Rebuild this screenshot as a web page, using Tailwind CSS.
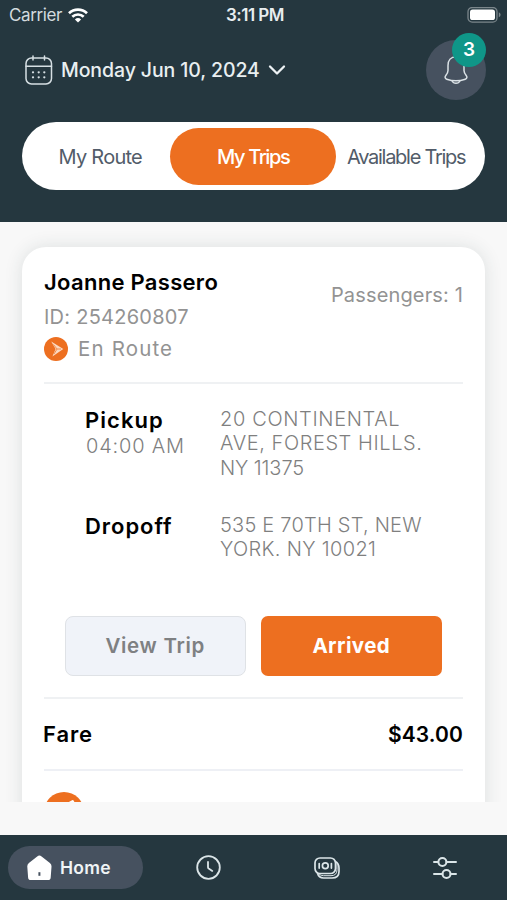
<!DOCTYPE html>
<html lang="en">
<head>
<meta charset="utf-8">
<title>My Trips</title>
<script src="https://cdn.jsdelivr.net/npm/@tailwindcss/browser@4"></script>
</head>
<body class="w-[507px] h-[900px] overflow-hidden bg-[#f8f8f8] font-['Inter',sans-serif] flex flex-col whitespace-nowrap">

<header class="h-[222px] shrink-0 bg-[#25373f] flex flex-col">
  <!-- Status bar -->
  <div class="h-[30px] grid grid-cols-3 items-center pl-[9px] pr-[6px] text-[17px] text-[#dfe5e8]">
    <div class="flex items-center gap-[6px] pt-px">
      <span class="tracking-[-0.4px] text-[#d3dade]">Carrier</span>
      <svg class="w-5 h-[15px]" viewBox="0 0 20 15" fill="none" stroke="#fff" stroke-width="2.7"><path d="M1 5.3a13 13 0 0 1 18 0M4.3 8.800a8.200 8.200 0 0 1 11.400 0"/><path d="M10 14.600 6.900 11.500a4.600 4.600 0 0 1 6.200 0z" fill="#fff" stroke="none"/></svg>
    </div>
    <span class="pt-[2px] text-center font-semibold tracking-[-0.5px] text-[#e8edf0]">3:11 PM</span>
    <svg class="w-[34px] h-[17px] justify-self-end" viewBox="0 0 34 17"><rect x="1" y="0.5" width="29" height="14.6" rx="4.2" fill="none" stroke="#7b868b" stroke-width="1.3"/><rect x="3" y="2.500" width="25" height="10.6" rx="2.6" fill="#fff"/><path d="M31.800 5.300v5q1.800-.8 1.800-2.500t-1.800-2.500z" fill="#7b868b"/></svg>
  </div>

  <!-- Date selector and notifications -->
  <div class="h-[80px] flex items-center pl-[25px] pr-[21px]">
    <svg class="w-[28px] h-[30px]" viewBox="0 0 28 30" fill="none" stroke="#d6dfe3" stroke-width="1.5" stroke-linecap="round"><rect x="1" y="3" width="25.500" height="26" rx="5.500"/><path d="M1 11.200h25.500M8 1v4M19.500 1v4"/><path d="M8 17.300h.01M13.700 17.300h.01M19.300 17.300h.01M8 22.300h.01M13.700 22.300h.01M19.300 22.300h.01" stroke-width="2.300"/></svg>
    <span class="ml-[8px] pt-px text-[19.5px] font-medium tracking-[-0.1px] text-[#e9eff1]">Monday Jun 10, 2024</span>
    <svg class="ml-[8px] w-[18px] h-[12px]" viewBox="0 0 18 12" fill="none" stroke="#edf2f4" stroke-width="2.300" stroke-linecap="round" stroke-linejoin="round"><path d="M2 2.500l7 7 7-7"/></svg>
    <div class="relative ml-auto w-[60px] h-[60px] rounded-full bg-[#46515f] flex items-center justify-center">
      <svg class="w-[26px] h-[30px]" viewBox="0 0 26 30" fill="none" stroke="#dbe2e6" stroke-width="1.500" stroke-linejoin="round" stroke-linecap="round"><path d="M13 1.800C7.800 1.800 5 5.600 5 10.400v5.200c0 1.900-.8 3.200-2.200 4.900-1.200 1.500-.9 3.100.9 3.700 6 2 12.600 2 18.600 0 1.800-.6 2.100-2.200.9-3.700-1.400-1.700-2.200-3-2.200-4.900v-5.200C21 5.600 18.200 1.800 13 1.800z"/><path d="M9 25.700c.8 1.700 2.300 2.600 4 2.600s3.200-.9 4-2.600"/></svg>
      <span class="absolute left-[26px] top-[-7px] w-[34px] h-[34px] rounded-full bg-[#0f9688] text-white text-[19px] font-semibold flex items-center justify-center pt-px">3</span>
    </div>
  </div>

  <!-- Tabs -->
  <div class="mt-[12px] mx-[22px] h-[68px] rounded-full bg-white flex items-center text-[20px] text-[#525c69]">
    <div class="w-[148px] pt-px pl-[36.500px] tracking-[-0.74px]">My Route</div>
    <div class="w-[166px] h-[57px] rounded-full bg-[#ed6f20] text-white font-medium flex items-center pt-px pl-[47px] tracking-[-1.36px]">My Trips</div>
    <div class="pt-px pl-[11px] tracking-[-1.27px]">Available Trips</div>
  </div>
</header>

<!-- Trip list -->
<main class="h-[580px] shrink-0 overflow-hidden px-[22px] pt-[25px]">
  <article class="h-[640px] rounded-[24px] bg-white px-[22px] shadow-[0_0_18px_rgba(40,60,60,0.13)] text-[20px] text-[#939393]">
    <div class="h-[137px] pt-[19px] flex justify-between border-b-2 border-[#eff1f3]">
      <div>
        <h1 class="h-[32px] leading-[32px] text-[22px] font-semibold tracking-[0.3px] text-black">Joanne Passero</h1>
        <p class="h-[35px] leading-[38px] tracking-[0.25px]">ID: 254260807</p>
        <div class="h-[32px] flex items-center">
          <svg class="w-6 h-6" viewBox="0 0 24 24"><circle cx="12" cy="12" r="12" fill="#ed6f20"/><path d="M7.200 4.500 19.300 12 8.400 19.500 11.600 12z" fill="#fbd9c2"/><path d="M9.500 7.500l3.500 4.500-3 5M13 12h4" fill="none" stroke="#ed6f20" stroke-width=".7"/></svg>
          <span class="ml-[10px] pt-px text-[20.500px] tracking-[1.15px]">En Route</span>
        </div>
      </div>
      <p class="mt-[14px] h-[30px] leading-[30px] tracking-[0.15px]">Passengers: 1</p>
    </div>

    <div class="pt-[23px] pl-[42px] font-light text-[#7f7f7f]">
      <div class="flex h-[106px]">
        <div class="w-[134px]">
          <h2 class="h-[26px] leading-[26px] text-[22px] font-semibold tracking-[1.05px] text-black -ml-px">Pickup</h2>
          <p class="h-[26px] leading-[27px] tracking-[0.8px]">04:00 AM</p>
        </div>
        <p class="leading-[24.400px]"><span class="tracking-[0.65px]">20 CONTINENTAL</span><br><span class="tracking-[0.57px]">AVE, FOREST HILLS.</span><br><span class="tracking-[-0.1px]">NY 11375</span></p>
      </div>
      <div class="flex h-[103px]">
        <h2 class="w-[135px] h-[26px] leading-[26px] text-[22px] font-semibold tracking-[0.95px] text-black -ml-px">Dropoff</h2>
        <p class="leading-[24.400px]"><span class="tracking-[0.22px]">535 E 70TH ST, NEW</span><br><span class="tracking-[0.33px]">YORK. NY 10021</span></p>
      </div>
    </div>

    <div class="h-[83px] px-[21px] flex gap-[15px] border-b-2 border-[#eff1f3]">
      <button class="w-[181px] h-[60px] pt-px rounded-[8px] border-[1.500px] border-[#dfe2e6] bg-[#f0f3f9] text-[20.500px] font-semibold tracking-[0.7px] text-[#7e8082]">View Trip</button>
      <button class="w-[182px] h-[60px] pt-px rounded-[7px] bg-[#ed6f20] text-[20.500px] font-bold tracking-[0.400px] text-white">Arrived</button>
    </div>

    <div class="h-[72px] flex items-center justify-between border-b-2 border-[#eef0f5] text-[21px] font-semibold text-black">
      <span class="text-[22px] tracking-[0.9px] -ml-px pt-px">Fare</span>
      <span class="tracking-[0.1px] pt-px">$43.00</span>
    </div>

    <svg class="mt-[21px] w-[40px] h-[40px]" viewBox="0 0 40 40"><circle cx="20" cy="20" r="20" fill="#ed6f20"/><path d="M24 10.500l4.500-2.500q1.500 0 2 2.500l-3 10-15 8z" fill="#fff"/></svg>
  </article>
</main>

<!-- Bottom navigation -->
<nav class="mt-[33px] h-[65px] shrink-0 bg-[#25373f] flex items-center px-[8px] text-[#dbe5e8]">
  <a class="w-[135px] h-[43px] rounded-full bg-[#46515f] flex items-center pl-[18px] text-[17.500px] font-semibold tracking-[0.300px] text-[#f0f4f6]">
    <svg class="w-[27px] h-[26px]" viewBox="0 0 27 26"><path d="M11.200 1.400q2.200-1.600 4.400 0l8.300 6.600q1.800 1.400 1.600 3.700l-.8 10.800q-.2 2.600-2.800 2.600H4.900q-2.600 0-2.800-2.600L1.300 11.700Q1.100 9.400 2.900 8z" fill="#fff"/><path d="M13.400 17.200v3.600" stroke="#46515f" stroke-width="2" /></svg>
    <span class="ml-[7px] pt-px">Home</span>
  </a>
  <svg class="ml-[53px] w-[25px] h-[25px]" viewBox="0 0 25 25" fill="none" stroke="currentColor" stroke-width="1.800" stroke-linecap="round" stroke-linejoin="round"><circle cx="12.500" cy="12.500" r="11.300"/><path d="M12 7v5.200q0 .8.700 1.300l3.600 2.400"/></svg>
  <svg class="ml-[93px] w-[26px] h-[24px]" viewBox="0 0 26 24" fill="none" stroke="currentColor" stroke-width="1.700" stroke-linecap="round"><rect x="1" y="2" width="20.500" height="15.500" rx="5"/><path d="M3.500 17.300q1.300 4.700 6 4.700h8.500q7 0 7-6.500v-3.500q0-4.500-3.600-6.500"/><path d="M5.500 18.500q1.500 1.200 4 1.200h7.500q6 0 6-6V7.500" stroke-width="1"/><circle cx="11.300" cy="9.800" r="2.900"/><path d="M5.200 7.500v4.600M17.400 7.500v4.600"/></svg>
  <svg class="ml-[92px] w-[26px] h-[24px]" viewBox="0 0 26 24" fill="none" stroke="currentColor" stroke-width="2" stroke-linecap="round"><path d="M2 6H6M14.500 6H24M2 18h8.500M18.500 18H24"/><circle cx="10.400" cy="6" r="4"/><circle cx="14.500" cy="18" r="4"/></svg>
</nav>
</body>
</html>
